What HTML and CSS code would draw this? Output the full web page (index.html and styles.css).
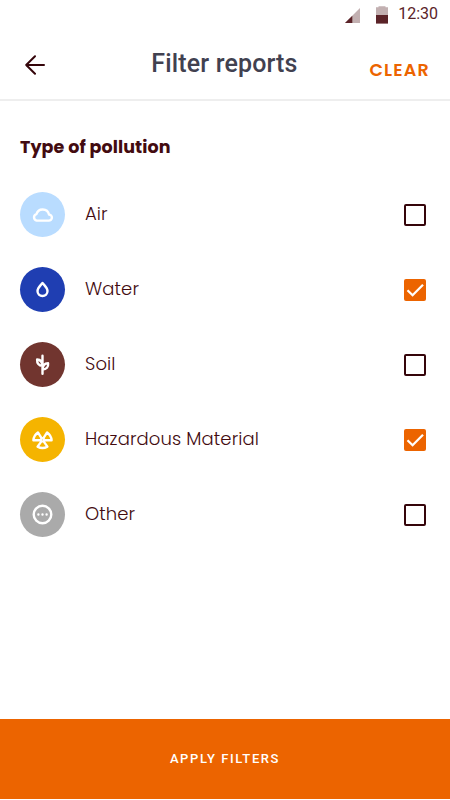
FILE: index.html
```
<!DOCTYPE html>
<html lang="en">
<head>
<meta charset="utf-8">
<title>Filter reports</title>
<link rel="stylesheet" href="styles.css">
</head>
<body>
<div class="screen">
  <div class="status">
    <svg class="signal" width="15" height="15" viewBox="0 0 15 15"><path d="M0 15 15 0V15Z" fill="#c2b0b1"/><path d="M0 15 7.3 7.7V15Z" fill="#5a2328"/></svg>
    <svg class="battery" width="12" height="18" viewBox="0 0 12 18"><path d="M0 1.3H2.5V.2h7v1.1H12V9H0Z" fill="#c2b0b1"/><path d="M0 9H12v8.6H0Z" fill="#5a2328"/></svg>
    <span class="time">12:30</span>
  </div>
  <header class="header">
    <svg class="back" width="20" height="20" viewBox="0 0 20 20"><path d="M19 10H1.2M10 1.2 1.2 10 10 18.8"/></svg>
    <h1 class="title">Filter reports</h1>
    <button class="clear">CLEAR</button>
  </header>
  <main class="content">
    <h2 class="heading">Type of pollution</h2>
    <label class="row">
      <span class="icon air"><svg width="23" height="23" viewBox="0 0 23 23"><path d="M5.7 17.6H17.7A3 3 0 0 0 18 11.5A6.5 6.5 0 0 0 5.4 11.2A3.3 3.3 0 0 0 5.7 17.6Z"/></svg></span>
      <span class="name">Air</span>
      <svg class="box" width="22" height="22" viewBox="0 0 22 22"><rect x="1" y="1" width="20" height="20" rx="1"/></svg>
    </label>
    <label class="row">
      <span class="icon water"><svg width="23" height="23" viewBox="0 0 23 23"><path d="M11.5 4.9C10 7.1 6.5 9.6 6.5 13a5 5 0 0 0 10 0C16.5 9.6 13 7.1 11.5 4.9Z"/></svg></span>
      <span class="name">Water</span>
      <svg class="box checked" width="22" height="22" viewBox="0 0 22 22"><rect width="22" height="22" rx="2"/><path d="M3.5 11.2 8.6 16.2 19 5.7"/></svg>
    </label>
    <label class="row">
      <span class="icon soil"><svg width="23" height="23" viewBox="0 0 23 23"><path d="M11.5 2.8V20.8M11.3 12.8C7.8 12.8 5.9 10.3 6.1 6.5C9.2 6.7 11.3 8.9 11.3 12.8ZM11.7 16.5C15.4 16.5 17.5 14 17.1 10.3C13.8 10.4 11.7 12.6 11.7 16.5Z"/></svg></span>
      <span class="name">Soil</span>
      <svg class="box" width="22" height="22" viewBox="0 0 22 22"><rect x="1" y="1" width="20" height="20" rx="1"/></svg>
    </label>
    <label class="row">
      <span class="icon hazard"><svg width="23" height="23" viewBox="0 0 23 23"><path d="M2.4 12.2Q2.8 7.3 6.9 4.4L10.7 10.3 9.5 12.2ZM20.6 12.2Q20.2 7.3 16.1 4.4L12.3 10.3 13.5 12.2ZM10.4 13.4H12.6L16.4 18.6Q11.5 21.4 6.6 18.6Z"/></svg></span>
      <span class="name">Hazardous Material</span>
      <svg class="box checked" width="22" height="22" viewBox="0 0 22 22"><rect width="22" height="22" rx="2"/><path d="M3.5 11.2 8.6 16.2 19 5.7"/></svg>
    </label>
    <label class="row">
      <span class="icon other"><svg width="23" height="23" viewBox="0 0 23 23"><circle cx="11.5" cy="11.5" r="8.8"/><path d="M7.4 11.5h.01M11.5 11.5h.01M15.6 11.5h.01"/></svg></span>
      <span class="name">Other</span>
      <svg class="box" width="22" height="22" viewBox="0 0 22 22"><rect x="1" y="1" width="20" height="20" rx="1"/></svg>
    </label>
  </main>
  <button class="apply">APPLY FILTERS</button>
</div>
</body>
</html>
```
FILE: styles.css
```
* { box-sizing: border-box; }
body { margin: 0; background: #fff; }
button { border: 0; padding: 0; background: none; }
.screen {
  width: 450px;
  height: 800px;
  padding-bottom: 1px;
  display: flex;
  flex-direction: column;
  font-family: Poppins, Inter, sans-serif;
  color: #430b10;
}
.status {
  height: 30px;
  display: flex;
  align-items: flex-start;
  justify-content: flex-end;
  padding: 6px 12px 0 0;
}
.signal { margin: 2px 16px 0 0; }
.battery { margin-right: 10px; }
.time {
  font: 400 16px/16px Roboto, sans-serif;
  color: #5a2328;
}
.header {
  height: 71px;
  display: grid;
  grid-template-columns: 100px 249px 101px;
  align-items: center;
  border-bottom: 2px solid #eee;
}
.back {
  margin-left: 25px;
  fill: none;
  stroke: #35050a;
  stroke-width: 2;
  stroke-linecap: round;
  stroke-linejoin: round;
}
.title {
  margin: 0 0 2px;
  text-align: center;
  font: 500 25px/30px Roboto, sans-serif;
  letter-spacing: .15px;
  color: #414150;
}
.clear {
  justify-self: end;
  margin: 11px 20px 0 0;
  font: 600 17.5px/20px Poppins, Inter, sans-serif;
  letter-spacing: 1.2px;
  color: #ec6400;
}
.content { flex: 1; padding: 34px 24px 0 20px; }
.heading {
  margin: 0 0 17px;
  font-size: 17.5px;
  line-height: 25px;
  font-weight: 700;
  letter-spacing: .08px;
}
.row {
  height: 75px;
  display: grid;
  grid-template-columns: 45px 1fr 22px;
  column-gap: 20px;
  align-items: center;
}
.icon {
  width: 45px;
  height: 45px;
  border-radius: 50%;
  display: grid;
  place-items: center;
}
.icon svg {
  fill: none;
  stroke: #fff;
  stroke-width: 2.4;
  stroke-linejoin: round;
  stroke-linecap: round;
}
.air { background: #b9dcff; }
.water { background: #1f3eb2; }
.soil { background: #71352f; }
.hazard { background: #f5b400; }
.other { background: #aaa; }
.name {
  font-size: 18px;
  line-height: 24px;
  font-weight: 300;
  letter-spacing: .11px;
  margin-bottom: 2px;
  white-space: nowrap;
}
.box { fill: none; stroke: #35050a; stroke-width: 2; }
.checked rect { fill: #ec6400; stroke: none; }
.checked path { stroke: #fff; stroke-width: 2.3; }
.apply {
  height: 80px;
  background: #ec6400;
  color: #fff;
  font: 500 13px/20px Roboto, sans-serif;
  letter-spacing: 1.6px;
}
```
